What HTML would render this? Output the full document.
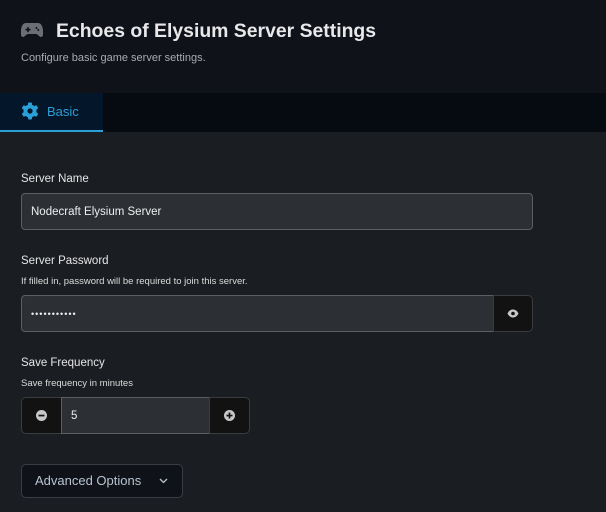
<!DOCTYPE html>
<html><head><style>
*{box-sizing:border-box;margin:0;padding:0}
body{width:606px;height:512px;overflow:hidden;background:#1a1d21;font-family:"Liberation Sans",sans-serif;color:#e6e6e6;position:relative}
.hdr{position:absolute;left:0;top:0;width:606px;height:93px;background:#0f1219}
.title{position:absolute;left:56px;top:20px;font-size:19.4px;font-weight:bold;color:#e8e8ea}
.sub{position:absolute;left:21px;top:52px;font-size:11px;color:#a8abb0}
.tabs{position:absolute;left:0;top:93px;width:606px;height:39px;background:#060b12}
.tab{position:absolute;left:0;top:0;width:103px;height:39px;background:#04172a;border-bottom:2px solid #2a9fd8}
.tab span{position:absolute;left:47px;top:11px;font-size:13px;color:#2a9fd8}
.lbl{position:absolute;left:21px;font-size:11.5px;color:#e6e6e6}
.help{position:absolute;left:21px;font-size:9.5px;color:#dcdcdc}
.inp{position:absolute;background:#2c3035;border:1px solid #5a5f64;border-radius:4px;font-size:11.5px;color:#eee;padding-left:9px;display:flex;align-items:center}
.btn{position:absolute;background:#121212;border:1px solid #3a3d40;display:flex;align-items:center;justify-content:center}
</style></head><body>
<div class="hdr">
<svg style="position:absolute;left:21px;top:22px" width="22" height="16" viewBox="0 0 22 16"><path d="M5 1h12c3 0 4.5 3 5 7s0 7-2 7-3-3-5-3H7c-2 0-3 3-5 3s-2.5-3-2-7S2 1 5 1z" fill="#6b6e74"/><rect x="4.5" y="6.8" width="5" height="1.6" fill="#0f1219"/><rect x="6.2" y="5.1" width="1.6" height="5" fill="#0f1219"/><circle cx="15.5" cy="6" r="1" fill="#0f1219"/><circle cx="17.3" cy="8" r="1" fill="#0f1219"/></svg>
<div class="title">Echoes of Elysium Server Settings</div>
<div class="sub">Configure basic game server settings.</div>
</div>
<div class="tabs"><div class="tab">
<svg style="position:absolute;left:21px;top:9px" width="18" height="18" viewBox="0 0 18 18"><g fill="#2a9fd8"><circle cx="9" cy="9" r="6.5"/><g id="t"><rect x="7" y="0.5" width="4" height="4" rx="1"/><rect x="7" y="13.5" width="4" height="4" rx="1"/></g><use href="#t" transform="rotate(60 9 9)"/><use href="#t" transform="rotate(120 9 9)"/></g><circle cx="9" cy="9" r="2.6" fill="#04172a"/></svg>
<span>Basic</span></div></div>

<div class="lbl" style="top:173px">Server Name</div>
<div class="inp" style="left:21px;top:193px;width:512px;height:37px">Nodecraft Elysium Server</div>

<div class="lbl" style="top:255px">Server Password</div>
<div class="help" style="top:276px">If filled in, password will be required to join this server.</div>
<div class="inp" style="left:21px;top:295px;width:473px;height:37px;border-radius:4px 0 0 4px;font-size:9px;letter-spacing:1px">•••••••••••</div>
<div class="btn" style="left:493px;top:295px;width:40px;height:37px;border-radius:0 5px 5px 0"><svg width="12" height="9" viewBox="0 0 12 9"><path d="M0.5 4.5C2 1.5 4 0.5 6 0.5s4 1 5.5 4C10 7.5 8 8.5 6 8.5S2 7.5 0.5 4.5z" fill="#c8c8c8"/><circle cx="6" cy="4.5" r="1.8" fill="#121212"/></svg></div>

<div class="lbl" style="top:357px">Save Frequency</div>
<div class="help" style="top:378px">Save frequency in minutes</div>
<div class="btn" style="left:21px;top:397px;width:41px;height:37px;border-radius:5px 0 0 5px"><svg width="11" height="11"><circle cx="5.5" cy="5.5" r="5.5" fill="#c8c8c8"/><rect x="2.5" y="4.7" width="6" height="1.7" fill="#121212"/></svg></div>
<div class="inp" style="left:61px;top:397px;width:149px;height:37px;border-radius:0">5</div>
<div class="btn" style="left:209px;top:397px;width:41px;height:37px;border-radius:0 5px 5px 0"><svg width="11" height="11"><circle cx="5.5" cy="5.5" r="5.5" fill="#c8c8c8"/><rect x="2.5" y="4.7" width="6" height="1.7" fill="#121212"/><rect x="4.65" y="2.5" width="1.7" height="6" fill="#121212"/></svg></div>

<div style="position:absolute;left:21px;top:464px;width:162px;height:34px;background:#0f1219;border:1px solid #3a3d42;border-radius:5px">
<span style="position:absolute;left:13px;top:8px;font-size:13px;color:#b8c4d0">Advanced Options</span>
<svg style="position:absolute;left:137px;top:13px" width="9" height="6"><path d="M1 1l3.5 3.5L8 1" stroke="#b8c4d0" stroke-width="1.3" fill="none"/></svg>
</div>
</body></html>
